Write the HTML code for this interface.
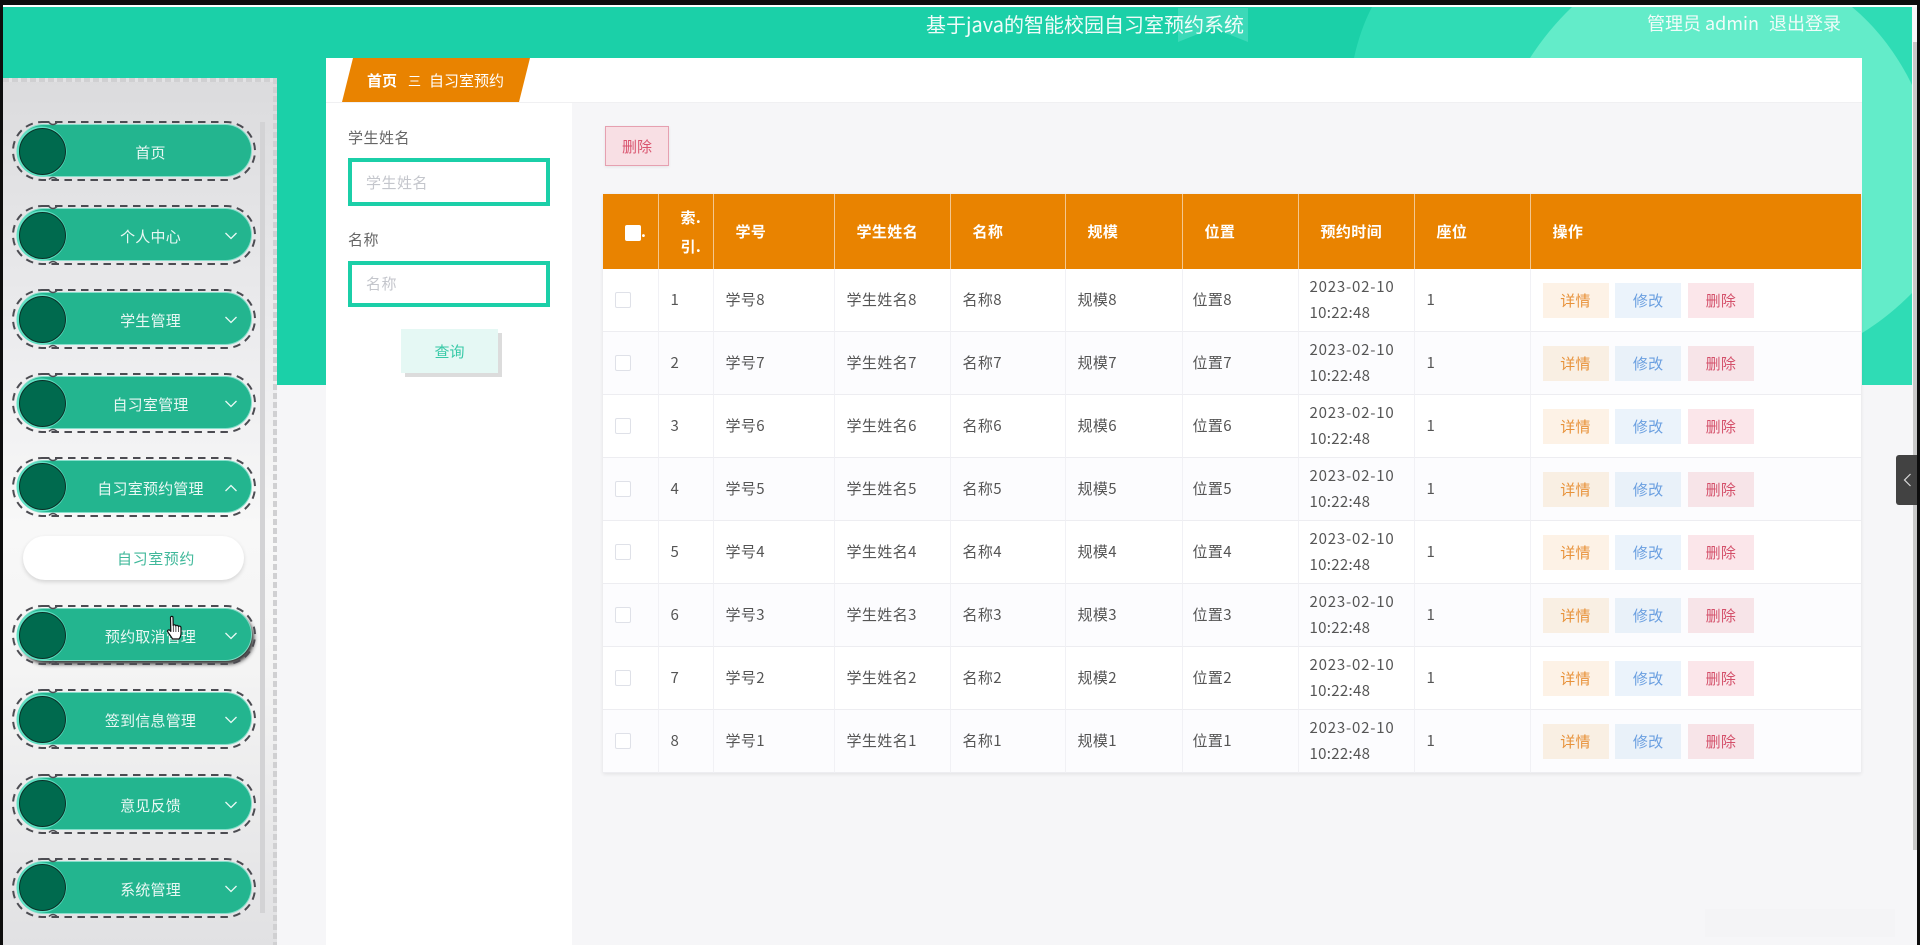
<!DOCTYPE html>
<html lang="zh-CN">
<head>
<meta charset="utf-8">
<title>基于java的智能校园自习室预约系统</title>
<style>
*{box-sizing:border-box}
html,body{margin:0;padding:0;width:1920px;height:945px;overflow:hidden;background:#0d0d0d;font-family:"Noto Sans CJK SC","Liberation Sans",sans-serif}
#page{position:absolute;left:3px;top:5px;width:1914px;height:940px;background:#f6f6f8;overflow:hidden;border-top:2px solid #fff}
#deco{position:absolute;left:0;top:0}
.t{position:absolute;white-space:nowrap}
#side{position:absolute;left:3px;top:78px;width:274px;height:867px;background:linear-gradient(180deg,#dbdbdd 0%,#ececee 30%,#f8f8f8 52%,#f4f4f4 68%,#e1e1e3 100%)}
#st{position:absolute;left:3px;top:78px;width:274px;height:4px;background:repeating-linear-gradient(90deg,#d0d0d2 0 6px,#e2e2e4 6px 9px)}
#sr{position:absolute;left:273px;top:78px;width:4px;height:867px;background:repeating-linear-gradient(180deg,#d0d0d2 0 6px,transparent 6px 9px)}
#sb{position:absolute;left:260px;top:122px;width:5px;height:791px;background:#d3d3d5}
.w{position:absolute;left:12px;width:244px;height:60px}
.w svg.o{position:absolute;left:0;top:0}
.p{position:absolute;left:6px;top:4px;width:233px;height:51px;border-radius:26px;background:#23b58f;box-shadow:0 0 0 1px #86dfcb}
.c{position:absolute;left:7px;top:6.5px;width:47px;height:47px;border-radius:50%;background:#006a4e;border:1.5px solid #0b2f26;box-shadow:-1px 0 0 1.5px #5fe0c3}
.l{position:absolute;left:60px;top:4px;width:157px;height:51px;line-height:56px;text-align:center;color:#e9f8f4;font-size:15px;letter-spacing:.2px;white-space:nowrap}
.a{position:absolute;left:212px;top:27px}
.sub{position:absolute;left:23px;top:536px;width:221px;height:44px;border-radius:22px;background:#fff;box-shadow:0 2px 4px rgba(0,0,0,.14);color:#3fb89a;font-size:15px;letter-spacing:.6px;line-height:45px;padding-left:94px}
#main{position:absolute;left:326px;top:58px;width:1536px;height:887px;background:#f6f6f8}
#bar{position:absolute;left:326px;top:58px;width:1536px;height:45px;background:#fff;border-bottom:1px solid #f0f0f2}
#fp{position:absolute;left:326px;top:103px;width:246px;height:842px;background:#fff}
.lab{position:absolute;left:348px;color:#666;font-size:15px;letter-spacing:.5px;line-height:22px}
.inp{position:absolute;left:348px;width:202px;border:4px solid #1bcfa8;background:#fff;color:#c4c6cc;font-size:15px;letter-spacing:.5px;padding-left:14px}
#q{position:absolute;left:401px;top:329px;width:97px;height:44px;background:#e5f8f4;color:#36c9a6;font-size:15px;line-height:46px;text-align:center;box-shadow:4px 4px 0 #dcdcdc}
#del{position:absolute;left:605px;top:125.5px;width:64px;height:40.5px;background:#f8dfe4;border:1px solid #e6a0b0;color:#d9546e;font-size:15px;line-height:40px;text-align:center;box-shadow:0 1px 3px rgba(0,0,0,.08)}
table{position:absolute;left:603px;top:194px;width:1258px;table-layout:fixed;border-collapse:separate;border-spacing:0;box-shadow:0 1px 4px rgba(0,0,0,.09);background:#fff}
th{height:75px;background:#e98300;color:#fff;font-size:15px;letter-spacing:.4px;font-weight:700;text-align:left;padding:0 0 0 22px;border-right:1px solid #f4c78f;line-height:29px;vertical-align:middle}
th:last-child,td:last-child{border-right:0}
td{height:63px;padding:0 0 0 12px;border-right:1px solid #f1f1f5;border-bottom:1px solid #ededf1;color:#555;font-size:15px;letter-spacing:.4px;line-height:26px;vertical-align:middle}
td.g{padding-left:10px}
td.h{padding-left:11px}
td.f{padding-left:12px;letter-spacing:.3px}
tr.e td{background:#fcfcfe}
.ck{display:block;width:16px;height:16px;border:1px solid #dfe1e8;border-radius:2px;background:#fff}
.hk{display:inline-block;width:16px;height:16px;background:#fff;border-radius:2px;vertical-align:middle}
.b{display:inline-block;width:66px;height:35px;line-height:36px;text-align:center;font-size:15px;margin-right:6.7px;vertical-align:middle}
.b1{background:#fdf2e6;color:#e8923a}
.b2{background:#ebf3fb;color:#6a9fe0}
.b3{background:#fbe6ea;color:#d4506a}
tr.e .b1{background:#f9efe3}
tr.e .b2{background:#e9f1f9}
tr.e .b3{background:#f7e4e8}
.d1{letter-spacing:.8px}
.d2{letter-spacing:.3px}
</style>
</head>
<body>
<div id="page"></div>

<svg id="deco" width="1920" height="945" viewBox="0 0 1920 945">
  <rect x="3" y="7" width="1909" height="378" fill="#1bd0a8"/>
  <path d="M1372 7Q1360 30 1354 58L1354 385L1912 385L1912 7Z" fill="#2fdcb5"/>
  <path d="M1572 7Q1548 30 1530 58L1530 340L1862 333C1880 322 1895 310 1912 293L1912 85C1900 60 1880 30 1852 7Z" fill="#63ecc9"/>
  <polygon points="1178,8 1248,8 1248,42 1213,28 1178,42" fill="#3cd9b8"/>
  <rect x="1913" y="42" width="4" height="808" fill="#c8c8c8"/>
  <ellipse cx="990" cy="945" rx="4" ry="1.5" fill="#a5d8ff"/>
</svg>

<div class="t" style="left:926px;top:9px;font-size:20px;line-height:30px;color:#f0fcf9">基于java的智能校园自习室预约系统</div>
<div class="t" style="left:1647px;top:9px;font-size:18px;line-height:28px;color:#f0fcf9">管理员 admin</div>
<div class="t" style="left:1769px;top:9px;font-size:18px;line-height:28px;color:#f0fcf9">退出登录</div>

<div id="main"></div>
<div style="position:absolute;left:1705px;top:909px;width:190px;height:28px;background:#f4f4f6"></div>
<div id="bar"></div>
<div id="fp"></div>

<svg style="position:absolute;left:342px;top:58px" width="190" height="44" viewBox="0 0 190 44"><polygon points="11,0 188,0 177,44 0,44" fill="#e98300"/></svg>
<div class="t" style="left:367px;top:69px;font-size:15px;line-height:24px;font-weight:700;color:#fff">首页</div>
<div class="t" style="left:408px;top:69px;font-size:13px;line-height:24px;color:#fff">三</div>
<div class="t" style="left:429px;top:69px;font-size:15px;line-height:24px;color:#fff">自习室预约</div>

<div class="lab" style="top:127px">学生姓名</div>
<div class="inp" style="top:158px;height:48px;line-height:41px">学生姓名</div>
<div class="lab" style="top:229px">名称</div>
<div class="inp" style="top:261px;height:46px;line-height:38px">名称</div>
<div id="q">查询</div>
<div id="del">删除</div>

<table>
<colgroup><col style="width:55.5px"><col style="width:55px"><col style="width:121px"><col style="width:116px"><col style="width:115px"><col style="width:117px"><col style="width:116px"><col style="width:116px"><col style="width:116px"><col style="width:330.5px"></colgroup>
<thead><tr><th><span class="hk"></span>.</th><th>索.<br>引.</th><th>学号</th><th>学生姓名</th><th>名称</th><th>规模</th><th>位置</th><th>预约时间</th><th>座位</th><th>操作</th></tr></thead>
<tbody>
<tr><td><span class="ck"></span></td><td>1</td><td>学号8</td><td>学生姓名8</td><td>名称8</td><td>规模8</td><td class="g">位置8</td><td class="h"><span class="d1">2023-02-10</span><br><span class="d2">10:22:48</span></td><td>1</td><td class="f"><span class="b b1">详情</span><span class="b b2">修改</span><span class="b b3">删除</span></td></tr>
<tr class="e"><td><span class="ck"></span></td><td>2</td><td>学号7</td><td>学生姓名7</td><td>名称7</td><td>规模7</td><td class="g">位置7</td><td class="h"><span class="d1">2023-02-10</span><br><span class="d2">10:22:48</span></td><td>1</td><td class="f"><span class="b b1">详情</span><span class="b b2">修改</span><span class="b b3">删除</span></td></tr>
<tr><td><span class="ck"></span></td><td>3</td><td>学号6</td><td>学生姓名6</td><td>名称6</td><td>规模6</td><td class="g">位置6</td><td class="h"><span class="d1">2023-02-10</span><br><span class="d2">10:22:48</span></td><td>1</td><td class="f"><span class="b b1">详情</span><span class="b b2">修改</span><span class="b b3">删除</span></td></tr>
<tr class="e"><td><span class="ck"></span></td><td>4</td><td>学号5</td><td>学生姓名5</td><td>名称5</td><td>规模5</td><td class="g">位置5</td><td class="h"><span class="d1">2023-02-10</span><br><span class="d2">10:22:48</span></td><td>1</td><td class="f"><span class="b b1">详情</span><span class="b b2">修改</span><span class="b b3">删除</span></td></tr>
<tr><td><span class="ck"></span></td><td>5</td><td>学号4</td><td>学生姓名4</td><td>名称4</td><td>规模4</td><td class="g">位置4</td><td class="h"><span class="d1">2023-02-10</span><br><span class="d2">10:22:48</span></td><td>1</td><td class="f"><span class="b b1">详情</span><span class="b b2">修改</span><span class="b b3">删除</span></td></tr>
<tr class="e"><td><span class="ck"></span></td><td>6</td><td>学号3</td><td>学生姓名3</td><td>名称3</td><td>规模3</td><td class="g">位置3</td><td class="h"><span class="d1">2023-02-10</span><br><span class="d2">10:22:48</span></td><td>1</td><td class="f"><span class="b b1">详情</span><span class="b b2">修改</span><span class="b b3">删除</span></td></tr>
<tr><td><span class="ck"></span></td><td>7</td><td>学号2</td><td>学生姓名2</td><td>名称2</td><td>规模2</td><td class="g">位置2</td><td class="h"><span class="d1">2023-02-10</span><br><span class="d2">10:22:48</span></td><td>1</td><td class="f"><span class="b b1">详情</span><span class="b b2">修改</span><span class="b b3">删除</span></td></tr>
<tr class="e"><td><span class="ck"></span></td><td>8</td><td>学号1</td><td>学生姓名1</td><td>名称1</td><td>规模1</td><td class="g">位置1</td><td class="h"><span class="d1">2023-02-10</span><br><span class="d2">10:22:48</span></td><td>1</td><td class="f"><span class="b b1">详情</span><span class="b b2">修改</span><span class="b b3">删除</span></td></tr>
</tbody>
</table>

<div id="side"></div>
<div id="st"></div>
<div id="sr"></div>
<div id="sb"></div>

<svg width="0" height="0" style="position:absolute"><symbol id="dash" viewBox="0 0 244 60"><rect x="1" y="1" width="242" height="58" rx="29" fill="none" stroke="#4c4c52" stroke-width="2" stroke-dasharray="7.5 5.5"/><path d="M37 1.5q4 4 8 0M37 58.5q4-4 8 0" fill="none" stroke="#4c4c52" stroke-width="1.5"/></symbol></svg>

<div class="w" style="top:121px"><div class="p"></div><svg class="o" width="244" height="60"><use href="#dash"/></svg><div class="c"></div><div class="l">首页</div></div>

<div class="w" style="top:205px"><div class="p"></div><svg class="o" width="244" height="60"><use href="#dash"/></svg><div class="c"></div><div class="l">个人中心</div><svg class="a" width="14" height="8" viewBox="0 0 14 8"><path d="M1.5 1L7 6.5L12.5 1" fill="none" stroke="#eafaf5" stroke-width="1.3"/></svg></div>

<div class="w" style="top:289px"><div class="p"></div><svg class="o" width="244" height="60"><use href="#dash"/></svg><div class="c"></div><div class="l">学生管理</div><svg class="a" width="14" height="8" viewBox="0 0 14 8"><path d="M1.5 1L7 6.5L12.5 1" fill="none" stroke="#eafaf5" stroke-width="1.3"/></svg></div>

<div class="w" style="top:373px"><div class="p"></div><svg class="o" width="244" height="60"><use href="#dash"/></svg><div class="c"></div><div class="l">自习室管理</div><svg class="a" width="14" height="8" viewBox="0 0 14 8"><path d="M1.5 1L7 6.5L12.5 1" fill="none" stroke="#eafaf5" stroke-width="1.3"/></svg></div>

<div class="w" style="top:456.5px"><div class="p"></div><svg class="o" width="244" height="60"><use href="#dash"/></svg><div class="c"></div><div class="l">自习室预约管理</div><svg class="a" width="14" height="8" viewBox="0 0 14 8"><path d="M1.5 7L7 1.5L12.5 7" fill="none" stroke="#eafaf5" stroke-width="1.3"/></svg></div>

<div class="sub">自习室预约</div>

<div class="w" style="top:605px"><div class="p" style="box-shadow:0 0 0 1px #7fd9c3,3px 4px 4px #333"></div><svg class="o" width="244" height="60"><use href="#dash"/></svg><div class="c"></div><div class="l">预约取消管理</div><svg class="a" width="14" height="8" viewBox="0 0 14 8"><path d="M1.5 1L7 6.5L12.5 1" fill="none" stroke="#eafaf5" stroke-width="1.3"/></svg></div>

<div class="w" style="top:689px"><div class="p"></div><svg class="o" width="244" height="60"><use href="#dash"/></svg><div class="c"></div><div class="l">签到信息管理</div><svg class="a" width="14" height="8" viewBox="0 0 14 8"><path d="M1.5 1L7 6.5L12.5 1" fill="none" stroke="#eafaf5" stroke-width="1.3"/></svg></div>

<div class="w" style="top:773.5px"><div class="p"></div><svg class="o" width="244" height="60"><use href="#dash"/></svg><div class="c"></div><div class="l">意见反馈</div><svg class="a" width="14" height="8" viewBox="0 0 14 8"><path d="M1.5 1L7 6.5L12.5 1" fill="none" stroke="#eafaf5" stroke-width="1.3"/></svg></div>

<div class="w" style="top:857.5px"><div class="p"></div><svg class="o" width="244" height="60"><use href="#dash"/></svg><div class="c"></div><div class="l">系统管理</div><svg class="a" width="14" height="8" viewBox="0 0 14 8"><path d="M1.5 1L7 6.5L12.5 1" fill="none" stroke="#eafaf5" stroke-width="1.3"/></svg></div>

<svg style="position:absolute;left:166px;top:615px" width="18" height="26" viewBox="0 0 18 26"><path d="M4.5 2.5C4.5 1 7 1 7 2.5L7.2 10.5C7.4 9.5 9.6 9.5 9.8 11C10 10 12.2 10 12.4 11.6C12.8 10.8 15 11 15 12.8L15 18C15 21 14 23 13 24L6.5 24C5.5 22 3.5 19.5 1.8 17C1 15.5 2.5 14.2 4 15.4L4.8 16.4Z" fill="#fff" stroke="#111" stroke-width="1.2" stroke-linejoin="round"/><path d="M7.3 11V17M9.9 11.5V17M12.5 12V17" stroke="#111" stroke-width=".7"/></svg>

<div style="position:absolute;left:1896px;top:455px;width:21px;height:50px;background:#424242;border-radius:3px 0 0 3px"></div>
<svg style="position:absolute;left:1903px;top:473px" width="9" height="14" viewBox="0 0 9 14"><path d="M7.5 1L1.5 7L7.5 13" fill="none" stroke="#d8d8d8" stroke-width="1.2"/></svg>
</body>
</html>
